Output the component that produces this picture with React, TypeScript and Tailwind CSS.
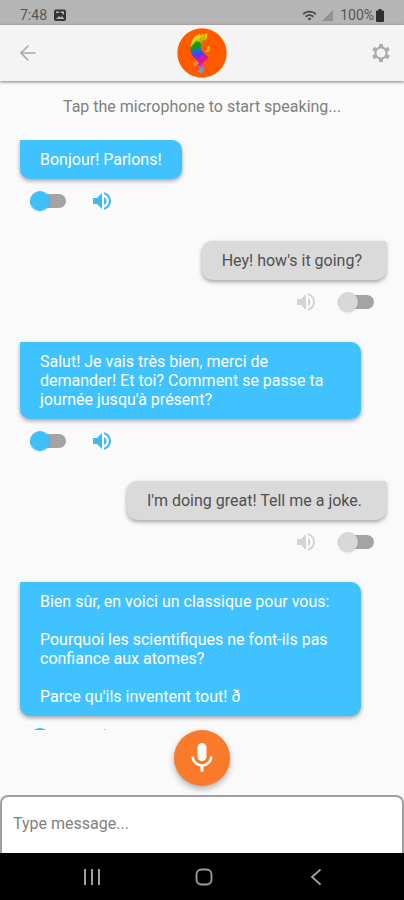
import React, { useState } from "react";
import { ArrowLeft } from "lucide-react";
import { MdMic, MdSignalCellular4Bar, MdVolumeUp, MdWifi } from "react-icons/md";

interface MessageProps {
  id: number;
  from: "bot" | "user";
  text: string;
}

const messages: MessageProps[] = [
  { id: 1, from: "bot", text: "Bonjour! Parlons!" },
  { id: 2, from: "user", text: "Hey! how's it going?" },
  {
    id: 3,
    from: "bot",
    text: "Salut! Je vais très bien, merci de demander! Et toi? Comment se passe ta journée jusqu'à présent?",
  },
  { id: 4, from: "user", text: "I'm doing great! Tell me a joke." },
  {
    id: 5,
    from: "bot",
    text: "Bien sûr, en voici un classique pour vous:\n\nPourquoi les scientifiques ne font-ils pas confiance aux atomes?\n\nParce qu'ils inventent tout! ð",
  },
];

const Logo = () => (
  <svg viewBox="0 0 150 150" className="size-[50px]" aria-hidden="true">
    <defs>
      <linearGradient id="rainbow" x1="0.45" y1="0" x2="0.55" y2="1">
        <stop offset="0" stopColor="#ff9a00" />
        <stop offset="0.12" stopColor="#f5d800" />
        <stop offset="0.22" stopColor="#7ccb1c" />
        <stop offset="0.34" stopColor="#139a1c" />
        <stop offset="0.43" stopColor="#1a6fd0" />
        <stop offset="0.53" stopColor="#4a3bf0" />
        <stop offset="0.63" stopColor="#a81bd0" />
        <stop offset="0.76" stopColor="#e0189a" />
        <stop offset="0.86" stopColor="#9c6be0" />
        <stop offset="1" stopColor="#2fd0e0" />
      </linearGradient>
    </defs>
    <circle cx="75" cy="75" r="74" fill="#ff5a00" />
    <path
      d="M60 22 68 18 72 23 77 15 81 21 88 14 91 22 87 38 80 35 77 42 73 50 71 58 75 68 82 78 94 88 88 96 80 102 77 112 80 126 74 135 63 131 67 118 59 106 62 98 50 88 42 76 40 58 44 40 52 27Z"
      fill="url(#rainbow)"
    />
    <path d="M44 40 52 27 60 22 68 18 64 28 54 38 46 50 41 58Z" fill="#e6d21c" />
    <path d="M48 52 58 40 70 44 71 58 58 60 46 62Z" fill="#169a14" />
    <path d="M73 23 76 24 71 38 68 38ZM82 21 85 22 80 34 77 34Z" fill="#ff7a00" />
    <path d="M92 54 98 55 98 70 90 73 84 68 91 65Z" fill="#ffb000" />
    <path d="M70 84 84 80 95 88 84 98 70 100Z" fill="#d31a9c" />
    <path d="M48 104 60 98 66 106 54 116Z" fill="#f08a2a" />
  </svg>
);

const GearIcon = () => (
  <svg viewBox="0 0 22 22" className="size-[22px]" fill="none" stroke="currentColor" aria-hidden="true">
    <circle cx="11" cy="11" r="5.6" strokeWidth="2.2" />
    <path
      d="M11 2v3M11 17v3M3.2 6.5l2.6 1.5M16.2 14l2.6 1.5M3.2 15.5 5.8 14M16.2 8l2.6-1.5"
      strokeWidth="4"
    />
  </svg>
);

const Toggle = ({ bot, label }: { bot: boolean; label: string }) => {
  const [on, setOn] = useState(false);

  return (
    <label className="relative flex h-5 w-9 cursor-pointer items-center">
      <input
        type="checkbox"
        aria-label={label}
        checked={on}
        onChange={() => setOn(!on)}
        className="sr-only"
      />
      <span className="h-3.5 w-full rounded-full bg-[#a4a4a4]" />
      <span
        className={`absolute top-0 size-5 rounded-full shadow-sm ${
          on ? "right-0" : "left-0"
        } ${bot ? "bg-[#40c0fb]" : "bg-[#d8d8d8]"}`}
      />
    </label>
  );
};

const Message = ({ message }: { message: MessageProps }) => {
  const bot = message.from === "bot";

  return (
    <li className={`flex flex-col ${bot ? "items-start" : "items-end"}`}>
      <p
        className={`max-w-[341px] py-2.5 text-base leading-[19px] whitespace-pre-line shadow-[0_2px_4px_rgba(0,0,0,0.35)] ${
          bot
            ? "rounded-[10px] rounded-tl-none bg-[#40c2ff] px-5 text-white"
            : "rounded-[10px] rounded-tr-none bg-[#dadada] pr-6 pl-5 text-[#505050]"
        }`}
      >
        {message.text}
      </p>
      <div
        className={`flex h-[62px] items-start pt-2.5 ${
          bot ? "gap-6 pl-2.5" : "flex-row-reverse gap-5 pr-3"
        }`}
      >
        <div className="flex h-6 items-center">
          <Toggle bot={bot} label="Translate" />
        </div>
        <button
          type="button"
          aria-label="Play message"
          className={`cursor-pointer ${bot ? "text-[#40b8f0]" : "text-[#d4d4d4]"}`}
        >
          <MdVolumeUp size={24} />
        </button>
      </div>
    </li>
  );
};

const StatusBar = () => (
  <div className="flex h-[25px] shrink-0 items-end justify-between bg-[#b5b5b5] px-5 text-[14px] leading-5 text-[#555555]">
    <div className="flex items-center gap-1.5">
      <span>7:48</span>
      <svg viewBox="0 0 14 14" className="size-3.5" aria-hidden="true">
        <rect x="1" y="1.5" width="12" height="11.5" rx="2" fill="#333333" />
        <path d="M3 3.5h3v1.5H3zM7.5 3.5H11v3H9.5V5h-2zM3 11l3-3 1.5 1.5L9 8l2.5 3z" fill="#b5b5b5" />
      </svg>
    </div>
    <div className="flex items-center">
      <MdWifi size={15} className="mr-1 text-[#4a4a4a]" />
      <MdSignalCellular4Bar size={13} className="mr-1.5 text-[#929292]" />
      <span>100%</span>
      <svg viewBox="0 0 8 13" className="ml-0.5 h-[13px] w-2" aria-hidden="true">
        <path d="M2.5 0h3v1.5H7a1 1 0 0 1 1 1V12a1 1 0 0 1-1 1H1a1 1 0 0 1-1-1V2.5a1 1 0 0 1 1-1h1.5z" fill="#303030" />
      </svg>
    </div>
  </div>
);

const NavBar = () => (
  <nav className="flex h-[47px] shrink-0 items-center justify-around bg-black pr-8 pl-9 text-[#a0a0a0]">
    <button type="button" aria-label="Recent apps">
      <svg viewBox="0 0 18 18" className="size-[18px]" fill="none" stroke="currentColor" strokeWidth="2">
        <path d="M2 1v16M9 1v16M16 1v16" />
      </svg>
    </button>
    <button type="button" aria-label="Home">
      <svg viewBox="0 0 18 18" className="size-[18px]" fill="none" stroke="currentColor" strokeWidth="1.8">
        <rect x="1.5" y="1.5" width="15" height="15" rx="5" />
      </svg>
    </button>
    <button type="button" aria-label="Back">
      <svg viewBox="0 0 18 18" className="size-[18px]" fill="none" stroke="currentColor" strokeWidth="1.8">
        <path d="M13.5 1.5 5 9l8.5 7.5" />
      </svg>
    </button>
  </nav>
);

const App = () => {
  const [draft, setDraft] = useState("");

  return (
    <div className="flex h-screen flex-col overflow-hidden bg-[#fafafa] font-[Roboto,sans-serif]">
      <StatusBar />
      <header className="z-10 grid h-14 shrink-0 grid-cols-3 items-center bg-[#f4f4f4] px-3 shadow-[0_1px_3px_rgba(0,0,0,0.5)]">
        <button type="button" aria-label="Go back" className="ml-1 justify-self-start text-[#a6a6a6]">
          <ArrowLeft size={24} strokeWidth={1.5} />
        </button>
        <div className="justify-self-center">
          <Logo />
        </div>
        <button type="button" aria-label="Settings" className="justify-self-end text-[#adadad]">
          <GearIcon />
        </button>
      </header>

      <p className="shrink-0 pt-4 pb-6 text-center text-base leading-[19px] text-[#808080]">
        Tap the microphone to start speaking...
      </p>

      <main className="min-h-0 flex-1 overflow-hidden pr-[18px] pl-5">
        <ul>
          {messages.map((message) => (
            <Message key={message.id} message={message} />
          ))}
        </ul>
      </main>

      <div className="flex shrink-0 justify-center pb-[9px]">
        <button
          type="button"
          aria-label="Start speaking"
          className="flex size-14 cursor-pointer items-center justify-center rounded-full bg-[#f97a2a] text-white shadow-[0_3px_6px_rgba(0,0,0,0.3)]"
        >
          <MdMic size={36} />
        </button>
      </div>

      <input
        type="text"
        aria-label="Message"
        placeholder="Type message..."
        value={draft}
        onChange={(e) => setDraft(e.target.value)}
        className="h-[58px] w-full shrink-0 rounded-t-lg border-2 border-b-0 border-[#a0a0a0] bg-white px-[11px] pb-1 text-base text-[#505050] outline-none placeholder:text-[#808080]"
      />
      <NavBar />
    </div>
  );
};

export default App;
